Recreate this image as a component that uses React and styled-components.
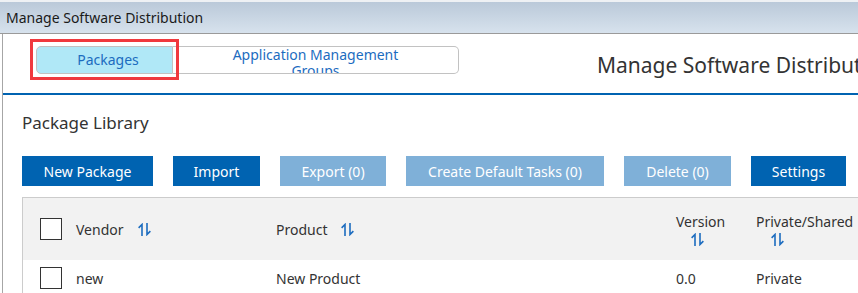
import styled, { createGlobalStyle } from "styled-components";

const GlobalStyle = createGlobalStyle`
    html, body {
        margin: 0;
        padding: 0;
        background: #ffffff;
    }
    body {
        font-family: "Noto Sans", "Open Sans", sans-serif;
        color: #333333;
    }
`

const columns = [
    { key: "vendor", label: "Vendor", width: "200px" },
    { key: "product", label: "Product", width: "400px" },
    { key: "version", label: "Version", width: "80px", stacked: true },
    { key: "shared", label: "Private/Shared", width: "1fr", stacked: true },
]

const rows = [
    { vendor: "new", product: "New Product", version: "0.0", shared: "Private" },
]

const buttons = [
    { label: "New Package", width: 131 },
    { label: "Import", width: 87 },
    { label: "Export (0)", width: 106, disabled: true },
    { label: "Create Default Tasks (0)", width: 198, disabled: true },
    { label: "Delete (0)", width: 107, disabled: true },
    { label: "Settings", width: 95 },
]

function SortIcon(){
    return(
        <svg width="13" height="13" viewBox="0 0 13 13" fill="none" stroke="currentColor" strokeWidth="1.6" strokeLinecap="square">
            <path d="M4 12.5V1.5L1.2 4.3" />
            <path d="M9 0.5V11.5L11.8 8.7" />
        </svg>
    )
}

export default function App(){
    const grid = "53px " + columns.map(c => c.width).join(" ")
    return(
        <Window>
            <GlobalStyle />
            <TitleBar>Manage Software Distribution</TitleBar>
            <Frame>
                <Header>
                    <Tabs>
                        <Highlight>
                            <Tab $active>Packages</Tab>
                        </Highlight>
                        <Tab $last>Application Management<br />Groups</Tab>
                    </Tabs>
                    <PageTitle>Manage Software Distribution</PageTitle>
                </Header>
                <Content>
                    <SectionTitle>Package Library</SectionTitle>
                    <Toolbar>
                        {buttons.map(b => (
                            <ActionButton key={b.label} $width={b.width} $disabled={b.disabled}>{b.label}</ActionButton>
                        ))}
                    </Toolbar>
                    <Table>
                        <HeadRow $grid={grid}>
                            <CheckCell><Checkbox /></CheckCell>
                            {columns.map(c => (
                                <HeadCell key={c.key} $stacked={c.stacked}>
                                    <span>{c.label}</span>
                                    <SortIcon />
                                </HeadCell>
                            ))}
                        </HeadRow>
                        {rows.map((r, i) => (
                            <BodyRow key={i} $grid={grid}>
                                <CheckCell><Checkbox /></CheckCell>
                                {columns.map(c => (
                                    <Cell key={c.key}>{r[c.key]}</Cell>
                                ))}
                            </BodyRow>
                        ))}
                    </Table>
                </Content>
            </Frame>
        </Window>
    )
}

const Window = styled.div`
    width: 858px;
    height: 293px;
    overflow: hidden;
    display: flex;
    flex-direction: column;
    background: #ffffff;
`
const TitleBar = styled.div`
    height: 31px;
    flex-shrink: 0;
    border-top: 2px solid #eef1f4;
    border-bottom: 1px solid #9a9a9a;
    background: linear-gradient(180deg, #bac9d9 0%, #d7e2ed 100%);
    padding-left: 6px;
    display: flex;
    align-items: center;
    font-size: 14px;
    color: #1a1a1a;
    white-space: nowrap;
`
const Frame = styled.div`
    flex: 1;
    margin-left: 2px;
    border-left: 1px solid #a6a6a6;
    display: flex;
    flex-direction: column;
    min-width: 0;
`
const Header = styled.div`
    height: 61px;
    flex-shrink: 0;
    display: flex;
    align-items: flex-start;
    padding: 5px 0 0 27px;
    box-sizing: border-box;
    border-bottom: 2px solid #0063b1;
    overflow: hidden;
    white-space: nowrap;
`
const Tabs = styled.div`
    display: flex;
    align-items: flex-start;
    flex-shrink: 0;
`
const Highlight = styled.div`
    border: 3px solid #f0393e;
    padding: 4px 3px 3px 3px;
    margin-right: -6px;
    position: relative;
    z-index: 1;
`
const Tab = styled.div`
    height: 28px;
    box-sizing: border-box;
    width: ${p => p.$active ? "137px" : "286px"};
    margin-top: ${p => p.$last ? "7px" : "0"};
    padding-left: ${p => p.$active ? "7px" : "0"};
    background: ${p => p.$active ? "#b0e8f7" : "#ffffff"};
    border: 1px solid #c2c2c2;
    border-left: ${p => p.$last ? "none" : "1px solid #c2c2c2"};
    border-radius: ${p => p.$last ? "0 5px 5px 0" : "5px 0 0 5px"};
    color: #1c6cbf;
    font-size: 14px;
    line-height: 16px;
    text-align: center;
    display: flex;
    align-items: ${p => p.$active ? "center" : "flex-start"};
    justify-content: center;
    overflow: hidden;
`
const PageTitle = styled.div`
    margin-left: 138px;
    margin-top: 12px;
    font-size: 21px;
    color: #333333;
    white-space: nowrap;
`
const Content = styled.div`
    padding-left: 19px;
    display: flex;
    flex-direction: column;
`
const SectionTitle = styled.div`
    font-size: 17px;
    margin-top: 16px;
    height: 24px;
    line-height: 24px;
    color: #333333;
`
const Toolbar = styled.div`
    display: flex;
    gap: 20px;
    margin-top: 21px;
`
const ActionButton = styled.div`
    width: ${p => p.$width}px;
    height: 30px;
    background: ${p => p.$disabled ? "#7fb0d8" : "#0063b1"};
    color: #ffffff;
    font-size: 14px;
    display: flex;
    align-items: center;
    justify-content: center;
    white-space: nowrap;
    flex-shrink: 0;
`
const Table = styled.div`
    margin-top: 11px;
    border-top: 1px solid #cccccc;
    border-left: 1px solid #cccccc;
    width: 900px;
`
const HeadRow = styled.div`
    display: grid;
    grid-template-columns: ${p => p.$grid};
    height: 62px;
    background: #f2f2f2;
    align-items: center;
`
const BodyRow = styled.div`
    display: grid;
    grid-template-columns: ${p => p.$grid};
    height: 36px;
    align-items: center;
`
const CheckCell = styled.div`
    padding-left: 17px;
    display: flex;
    align-items: center;
`
const Checkbox = styled.div`
    width: 22px;
    height: 22px;
    box-sizing: border-box;
    border: 1px solid #333333;
    background: #ffffff;
`
const HeadCell = styled.div`
    display: flex;
    flex-direction: ${p => p.$stacked ? "column" : "row"};
    align-items: ${p => p.$stacked ? "flex-start" : "center"};
    gap: ${p => p.$stacked ? "2px" : "14px"};
    font-size: 14px;
    color: #333333;
    white-space: nowrap;
    svg {
        color: #1c6cbf;
        margin-left: ${p => p.$stacked ? "15px" : "0"};
    }
`
const Cell = styled.div`
    font-size: 14px;
    color: #333333;
    white-space: nowrap;
`
